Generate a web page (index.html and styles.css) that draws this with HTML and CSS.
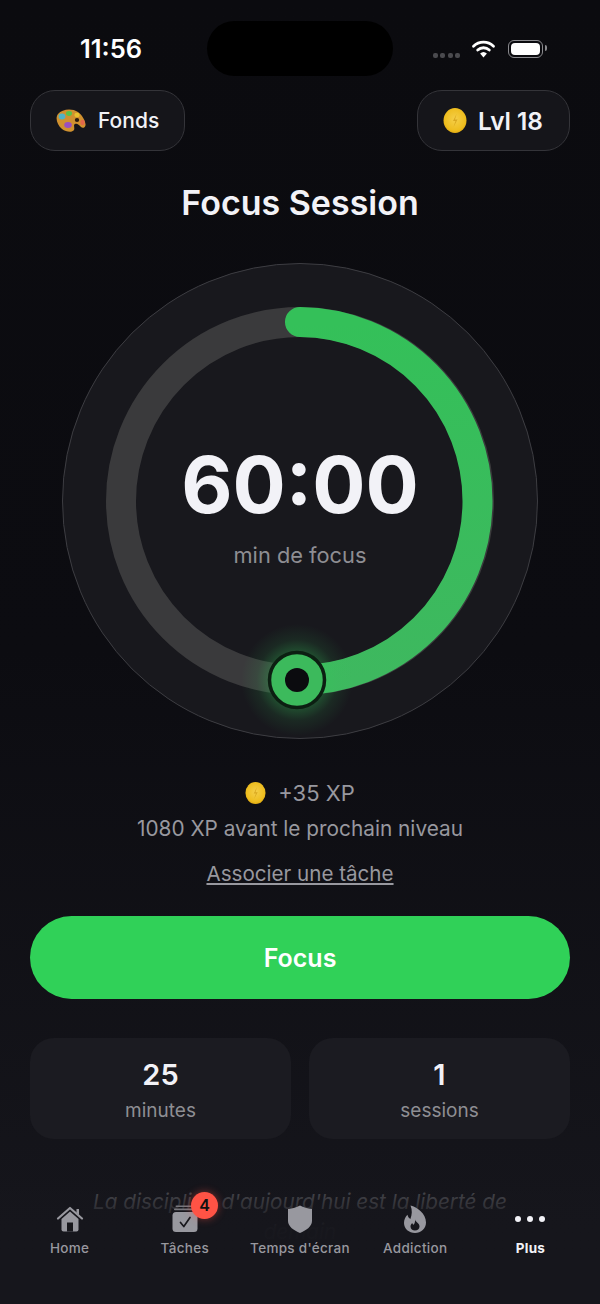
FILE: index.html
```html
<!DOCTYPE html>
<html lang="fr">
<head>
    <meta charset="UTF-8">
    <meta name="viewport" content="width=device-width, initial-scale=1.0">
    <title>Focus Session</title>
    <link rel="stylesheet" href="styles.css">
</head>
<body>
    <svg class="defs" width="0" height="0">
        <defs>
            <radialGradient id="coinFill" cx="0.5" cy="0.45" r="0.6">
                <stop offset="0" stop-color="#f5cf4a"/>
                <stop offset="0.75" stop-color="#eebd1e"/>
                <stop offset="1" stop-color="#dca30c"/>
            </radialGradient>
            <radialGradient id="knobGlow">
                <stop offset="0.45" stop-color="#34c759" stop-opacity="0.35"/>
                <stop offset="0.72" stop-color="#34c759" stop-opacity="0.1"/>
                <stop offset="1" stop-color="#34c759" stop-opacity="0"/>
            </radialGradient>
            <linearGradient id="arcFill" x1="0" y1="0" x2="0" y2="1">
                <stop offset="0" stop-color="#34c059"/>
                <stop offset="1" stop-color="#3eb85f"/>
            </linearGradient>
            <symbol id="coin" viewBox="0 0 24 25">
                <ellipse cx="12" cy="12.5" rx="11.5" ry="12.5" fill="url(#coinFill)"/>
                <path d="M13.5 6 L10 13 L12.5 13 L10.5 19 L14.5 11.5 L12 11.5 Z" fill="#d09c14" opacity="0.75"/>
            </symbol>
        </defs>
    </svg>

    <div class="phone">
        <div class="island"></div>

        <div class="status">
            <span class="clock">11:56</span>
            <div class="status-icons">
                <div class="signal"><i></i><i></i><i></i><i></i></div>
                <svg class="wifi" width="25" height="19" viewBox="0 0 24 19">
                    <path d="M2 7.2 A14.5 14.5 0 0 1 22 7.2" fill="none" stroke="#fff" stroke-width="2.8" stroke-linecap="round"/>
                    <path d="M6.2 11 A8.6 8.6 0 0 1 17.8 11" fill="none" stroke="#fff" stroke-width="2.8" stroke-linecap="round"/>
                    <path d="M12 18.6 L8.6 14.6 A5 5 0 0 1 15.4 14.6 Z" fill="#fff"/>
                </svg>
                <div class="battery"><div class="battery-level"></div></div>
            </div>
        </div>

        <div class="top-row">
            <div class="pill pill-fonds">
                <svg width="30" height="23" viewBox="0 0 30 23">
                    <path d="M2 5 C6 0 16 -1 22 3 C26 6 29 11 29.5 15 C30 18 27 20 25 18 C23 16 21 14 19 15 C17 16 19 19 18 21 C16 24 10 23 6 20 C1 16 -1 9 2 5 Z" fill="#d0912f"/>
                    <ellipse cx="6" cy="7.5" rx="3.4" ry="3" fill="#4fb3c8"/>
                    <ellipse cx="13" cy="4.5" rx="3" ry="2.4" fill="#58c24a"/>
                    <ellipse cx="21" cy="6" rx="2.6" ry="2.2" fill="#e8c12e"/>
                    <ellipse cx="12" cy="16" rx="3.8" ry="3" fill="#9a4fc0"/>
                    <ellipse cx="21" cy="11" rx="2.2" ry="2" fill="#2b1c10"/>
                    <ellipse cx="26.5" cy="13.5" rx="2.2" ry="2.8" fill="#e2674a"/>
                </svg>
                <span>Fonds</span>
            </div>
            <div class="pill pill-level">
                <svg width="24" height="25"><use href="#coin"/></svg>
                <span>Lvl 18</span>
            </div>
        </div>

        <h1>Focus Session</h1>

        <div class="timer">
            <svg width="476" height="476" viewBox="0 0 476 476">
                <circle cx="238" cy="238" r="237.5" fill="#18181d" stroke="#3d3d42" stroke-width="1"/>
                <circle cx="238" cy="238" r="179" fill="none" stroke="#3a3a3c" stroke-width="30"/>
                <path d="M238 59 A179 179 0 0 1 235 417" fill="none" stroke="url(#arcFill)" stroke-width="30" stroke-linecap="round"/>
                <circle cx="235" cy="417" r="56" fill="url(#knobGlow)"/>
                <circle cx="235" cy="417" r="27.5" fill="#3cba5c" stroke="#0c1f12" stroke-width="3.5"/>
                <circle cx="235" cy="417" r="12" fill="#0b0b0f"/>
            </svg>
            <div class="timer-text">
                <div class="time">60:00</div>
                <div class="time-label">min de focus</div>
            </div>
        </div>

        <div class="xp">
            <svg width="21" height="22"><use href="#coin"/></svg>
            <span>+35 XP</span>
        </div>
        <div class="next-level">1080 XP avant le prochain niveau</div>
        <a class="link-task">Associer une tâche</a>

        <button class="btn-focus">Focus</button>

        <div class="stats">
            <div class="stat">
                <div class="stat-value">25</div>
                <div class="stat-label">minutes</div>
            </div>
            <div class="stat">
                <div class="stat-value">1</div>
                <div class="stat-label">sessions</div>
            </div>
        </div>

        <p class="quote">La discipline d'aujourd'hui est la liberté de demain</p>

        <nav class="tabbar">
            <div class="tab">
                <svg width="28" height="28" viewBox="0 0 28 28">
                    <path d="M2 13.5 L14 3 L26 13.5" fill="none" stroke="#98989f" stroke-width="2.2" stroke-linecap="round" stroke-linejoin="round"/>
                    <path d="M20.5 4 H23 V10 L20.5 8 Z" fill="#98989f"/>
                    <path d="M5.5 14 L14 6.6 L22.5 14 V24.5 A2 2 0 0 1 20.5 26.5 H7.5 A2 2 0 0 1 5.5 24.5 Z" fill="#98989f"/>
                    <rect x="11" y="17.5" width="6" height="9" fill="#17171c"/>
                </svg>
                <span>Home</span>
            </div>
            <div class="tab">
                <svg width="28" height="28" viewBox="0 0 28 28">
                    <rect x="4.5" y="0.5" width="19" height="1.6" rx="0.8" fill="#77777d"/>
                    <rect x="3" y="3.6" width="22" height="1.6" rx="0.8" fill="#77777d"/>
                    <rect x="1.5" y="7" width="25" height="20" rx="3.5" fill="#98989f"/>
                    <path d="M9.5 17.5 L12.8 21.5 L19 12.5" fill="none" stroke="#17171c" stroke-width="1.7" stroke-linecap="round" stroke-linejoin="round"/>
                </svg>
                <span>Tâches</span>
                <b class="badge">4</b>
            </div>
            <div class="tab">
                <svg width="28" height="28" viewBox="0 0 28 28">
                    <path d="M14 0.5 C17.5 2.5 21 3.5 26 4 V16 C26 21.5 20 25.5 14 28 C8 25.5 2 21.5 2 16 V4 C7 3.5 10.5 2.5 14 0.5 Z" fill="#98989f"/>
                </svg>
                <span>Temps d'écran</span>
            </div>
            <div class="tab">
                <svg width="28" height="28" viewBox="0 0 28 28">
                    <path fill-rule="evenodd" d="M9.5 0.5 C16 2 25 8.5 25 17.5 C25 23.6 20 28 14 28 C8 28 3 23.8 3 18 C3 14.6 4.6 11.6 6.5 9.8 C7 12 8 13.4 9.4 14 C11 10 11.5 5 9.5 0.5 Z M14 14.5 C14.6 17 18.5 18 18.5 21.5 C18.5 24 16.4 25.4 14 25.4 C11.6 25.4 9.5 24 9.5 21.5 C9.5 20 10.4 18.8 11.2 18 C11.5 19 12 19.6 12.7 19.8 C13.6 18.4 14.4 16.6 14 14.5 Z" fill="#98989f"/>
                </svg>
                <span>Addiction</span>
            </div>
            <div class="tab tab-active">
                <svg width="30" height="28" viewBox="0 0 30 28">
                    <circle cx="3" cy="14" r="3" fill="#f2f2f7"/>
                    <circle cx="15" cy="14" r="3" fill="#f2f2f7"/>
                    <circle cx="27" cy="14" r="3" fill="#f2f2f7"/>
                </svg>
                <span>Plus</span>
            </div>
        </nav>
    </div>
</body>
</html>
```

FILE: styles.css
```css
body {
    font-family: Inter, "Liberation Sans", sans-serif;
    margin: 0;
    background-color: #0b0b0f;
}
.defs {
    display: block;
    height: 0;
}
.phone {
    position: relative;
    width: 600px;
    height: 1304px;
    overflow: hidden;
    display: flex;
    flex-direction: column;
    align-items: center;
    background: linear-gradient(180deg, #0b0b0f 0%, #0c0c11 50%, #15151b 92%);
}
.island {
    position: absolute;
    left: 207px;
    top: 21px;
    width: 186px;
    height: 55px;
    border-radius: 28px;
    background-color: #000;
}
.status {
    width: 100%;
    height: 90px;
    box-sizing: border-box;
    padding: 30px 57px 0 80px;
    display: flex;
    justify-content: space-between;
    align-items: flex-start;
}
.clock {
    color: #fff;
    font-size: 25.5px;
    font-weight: 600;
    line-height: 38px;
}
.status-icons {
    display: flex;
    align-items: center;
    padding-top: 9px;
}
.signal {
    display: flex;
    gap: 2.5px;
    margin-top: 13px;
    margin-right: 11px;
}
.signal i {
    width: 5px;
    height: 5px;
    border-radius: 2px;
    background-color: #4a4a4e;
}
.battery {
    position: relative;
    width: 29px;
    height: 12px;
    margin-left: 12px;
    padding: 2px;
    border: 1.5px solid #8a8a8e;
    border-radius: 6px;
}
.battery:after {
    content: "";
    position: absolute;
    right: -5px;
    top: 4px;
    width: 2px;
    height: 6px;
    border-radius: 0 2px 2px 0;
    background-color: #8a8a8e;
}
.battery-level {
    height: 100%;
    border-radius: 4px;
    background-color: #fff;
}
.top-row {
    width: 100%;
    box-sizing: border-box;
    padding: 0 30px;
    display: flex;
    justify-content: space-between;
}
.pill {
    height: 61px;
    box-sizing: border-box;
    display: flex;
    align-items: center;
    background-color: #15151a;
    border: 1.5px solid #343439;
    border-radius: 25px;
    color: #f2f2f7;
}
.pill-fonds {
    width: 155px;
    padding-left: 25px;
    gap: 12px;
    font-size: 21px;
    font-weight: 500;
}
.pill-level {
    width: 153px;
    padding-left: 25px;
    gap: 11px;
    font-size: 24.4px;
    font-weight: 600;
}
h1 {
    margin: 32px 0 0;
    color: #f2f2f7;
    font-size: 34px;
    line-height: 40px;
    font-weight: 600;
}
.timer {
    position: relative;
    width: 476px;
    height: 476px;
    margin-top: 40px;
}
.timer svg {
    display: block;
}
.timer-text {
    position: absolute;
    top: 0;
    left: 0;
    right: 0;
    bottom: 0;
    padding-top: 4px;
    box-sizing: border-box;
    display: flex;
    flex-direction: column;
    align-items: center;
    justify-content: center;
}
.time {
    color: #f2f2f7;
    font-size: 79px;
    line-height: 90px;
    font-weight: 700;
}
.time-label {
    margin-top: 13px;
    color: #8e8e93;
    font-size: 21.8px;
    line-height: 26px;
}
.xp {
    margin-top: 40px;
    height: 28px;
    display: flex;
    align-items: center;
    gap: 12px;
    color: #98989f;
    font-size: 22px;
}
.next-level {
    margin-top: 9px;
    color: #98989f;
    font-size: 20.8px;
    line-height: 26px;
}
.link-task {
    margin-top: 19px;
    color: #98989f;
    font-size: 20.6px;
    line-height: 26px;
    text-decoration: underline;
}
.btn-focus {
    width: 540px;
    height: 83px;
    margin-top: 29px;
    border: none;
    border-radius: 42px;
    background-color: #30d158;
    color: #fff;
    font-family: inherit;
    font-size: 25px;
    font-weight: 600;
}
.stats {
    width: 100%;
    box-sizing: border-box;
    margin-top: 39px;
    padding: 0 30px;
    display: flex;
    gap: 18px;
}
.stat {
    flex: 1;
    height: 101px;
    border-radius: 24px;
    background-color: #1b1b21;
    text-align: center;
}
.stat-value {
    margin-top: 18px;
    color: #f2f2f7;
    font-size: 29px;
    line-height: 38px;
    font-weight: 600;
}
.stat-label {
    margin-top: 5px;
    color: #8e8e93;
    font-size: 19px;
    line-height: 24px;
}
.quote {
    width: 460px;
    margin: 48px 0 0;
    color: #66666b;
    font-size: 20.7px;
    font-style: italic;
    line-height: 30px;
    text-align: center;
}
.tabbar {
    position: absolute;
    left: 0;
    right: 0;
    bottom: 0;
    height: 114px;
    box-sizing: border-box;
    padding: 15px 12px 0;
    display: flex;
    background: linear-gradient(180deg, rgba(22, 22, 28, 0.4) 0%, rgba(22, 22, 28, 0.97) 32%, #16161c 60%);
}
.tab {
    position: relative;
    flex: 1;
    display: flex;
    flex-direction: column;
    align-items: center;
    color: #98989f;
    font-size: 13.5px;
    font-weight: 500;
    line-height: 16px;
    letter-spacing: 0.3px;
    white-space: nowrap;
}
.tab svg {
    display: block;
    margin-bottom: 7px;
}
.tab-active {
    color: #f2f2f7;
    font-weight: 700;
}
.badge {
    position: absolute;
    left: 64px;
    top: -13px;
    width: 27px;
    height: 27px;
    border-radius: 50%;
    background-color: #ff5345;
    box-shadow: 0 0 8px rgba(255, 83, 69, 0.45);
    color: #111;
    font-size: 16px;
    font-weight: 600;
    line-height: 27px;
    text-align: center;
}
```
